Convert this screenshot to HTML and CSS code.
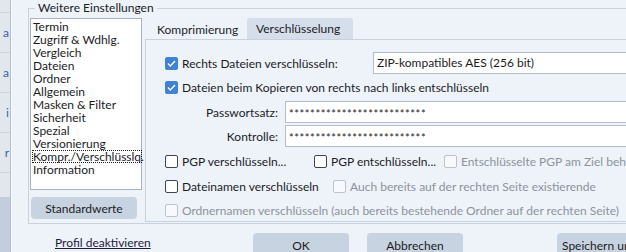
FILE: index.html
```html
<!DOCTYPE html>
<html lang="de">
<head>
    <meta charset="UTF-8">
    <title>Weitere Einstellungen</title>
    <link rel="stylesheet" href="styles.css">
</head>
<body>

<div class="window">

    <div class="side-strip">
        <div class="strip-top"></div>
        <div class="strip-cell">a</div>
        <div class="strip-cell">a</div>
        <div class="strip-cell">i</div>
        <div class="strip-cell">r</div>
        <div class="strip-rest"></div>
        <div class="strip-dark"></div>
    </div>

    <div class="main">
        <fieldset class="settings">
            <legend>Weitere Einstellungen</legend>

            <div class="left-col">
                <ul class="page-list">
                    <li>Termin</li>
                    <li>Zugriff &amp; Wdhlg.</li>
                    <li>Vergleich</li>
                    <li>Dateien</li>
                    <li>Ordner</li>
                    <li>Allgemein</li>
                    <li>Masken &amp; Filter</li>
                    <li>Sicherheit</li>
                    <li>Spezial</li>
                    <li>Versionierung</li>
                    <li class="focused">Kompr./Verschlüsslq.</li>
                    <li>Information</li>
                </ul>
                <button class="btn btn-defaults">Standardwerte</button>
            </div>

            <div class="tabs">
                <div class="tab-strip">
                    <div class="tab">Komprimierung</div>
                    <div class="tab active">Verschlüsselung</div>
                </div>
                <div class="tab-panel">

                    <div class="row">
                        <label class="check check-wide"><span class="box checked"></span>Rechts Dateien verschlüsseln:</label>
                        <div class="combo">ZIP-kompatibles AES (256 bit)</div>
                    </div>

                    <div class="row">
                        <label class="check"><span class="box checked"></span>Dateien beim Kopieren von rechts nach links entschlüsseln</label>
                    </div>

                    <div class="row row-field">
                        <span class="field-label">Passwortsatz:</span>
                        <div class="text-field">**************************</div>
                    </div>

                    <div class="row">
                        <span class="field-label">Kontrolle:</span>
                        <div class="text-field">**************************</div>
                    </div>

                    <div class="row row-pgp">
                        <label class="check w-149"><span class="box"></span>PGP verschlüsseln...</label>
                        <label class="check w-130"><span class="box"></span>PGP entschlüsseln...</label>
                        <label class="check disabled"><span class="box"></span>Entschlüsselte PGP am Ziel behalten</label>
                    </div>

                    <div class="row row-names">
                        <label class="check w-168"><span class="box"></span>Dateinamen verschlüsseln</label>
                        <label class="check disabled"><span class="box"></span>Auch bereits auf der rechten Seite existierende</label>
                    </div>

                    <div class="row">
                        <label class="check disabled"><span class="box"></span>Ordnernamen verschlüsseln (auch bereits bestehende Ordner auf der rechten Seite)</label>
                    </div>

                </div>
            </div>
        </fieldset>

        <div class="bottom-bar">
            <a class="link" href="#">Profil deaktivieren</a>
            <button class="btn btn-ok">OK</button>
            <button class="btn btn-cancel">Abbrechen</button>
            <button class="btn btn-save">Speichern unter...</button>
        </div>
    </div>

</div>

</body>
</html>
```

FILE: styles.css
```css
body {
    font-family: Lato, "Noto Sans", sans-serif;
    font-size: 12px;
    color: #1b1b1f;
    background-color: #eef3fa;
    margin: 0;
    padding: 0;
    width: 626px;
    height: 252px;
    overflow: hidden;
}

.window {
    display: flex;
    height: 252px;
    width: 720px;
}

/* abgeschnittene Liste links */
.side-strip {
    width: 10px;
    flex-shrink: 0;
    display: flex;
    flex-direction: column;
    background-color: #e2e6ed;
    border-right: 1px solid #b3bccb;
    box-shadow: 1px 0 0 #f8fafd;
    margin-right: 17px;
}

.strip-top {
    height: 13px;
    border-bottom: 1px solid #cdd3dd;
    box-sizing: border-box;
}

.strip-cell {
    height: 40px;
    box-sizing: border-box;
    border-bottom: 1px solid #cdd3dd;
    display: flex;
    align-items: center;
    justify-content: flex-end;
    color: #3263a8;
    overflow: hidden;
    padding-right: 1px;
}

.strip-rest {
    height: 24px;
}

.strip-dark {
    flex: 1;
    background-color: #c3cddc;
}

.main {
    display: flex;
    flex-direction: column;
    width: 690px;
}

.settings {
    box-sizing: border-box;
    height: 224px;
    margin: 0;
    padding: 2px 0 0 1px;
    border: 1px solid #c9d1dd;
    display: flex;
    gap: 3px;
}

.settings legend {
    margin-left: 5px;
    padding: 0 3px;
    line-height: 16px;
    font-size: 12px;
}

.left-col {
    display: flex;
    flex-direction: column;
    gap: 7px;
}

.page-list {
    box-sizing: border-box;
    width: 112px;
    height: 172px;
    margin: 0;
    padding: 1px 0 0 1px;
    list-style: none;
    background-color: #fff;
    border: 1px solid #a9b2c1;
}

.page-list li {
    height: 13px;
    line-height: 13px;
    padding-left: 1px;
    white-space: nowrap;
    box-sizing: border-box;
    width: 110px;
}

.page-list li.focused {
    border: 1px dotted #222;
    padding-left: 0;
    line-height: 11px;
}

.btn {
    font-family: inherit;
    font-size: 12px;
    color: #1b1b1f;
    background-color: #c8d3e1;
    border: none;
    border-radius: 4px;
    padding: 0;
}

.btn-defaults {
    width: 106px;
    height: 22px;
    margin-left: 1px;
}

.tabs {
    display: flex;
    flex-direction: column;
    flex: 1;
}

.tab-strip {
    display: flex;
    height: 21px;
    padding-left: 2px;
    align-items: flex-end;
}

.tab {
    width: 100px;
    height: 21px;
    line-height: 23px;
    box-sizing: border-box;
    padding-left: 10px;
}

.tab.active {
    width: 106px;
    padding-left: 9px;
    background-color: #d5deea;
    border-radius: 3px 3px 0 0;
    line-height: 22px;
}

.tab-panel {
    box-sizing: border-box;
    height: 183px;
    border: 1px solid #c9d1dd;
    border-right: 0;
    padding: 12px 0 0 19px;
    display: flex;
    flex-direction: column;
    gap: 2px;
}

.row {
    display: flex;
    align-items: center;
    height: 22px;
    white-space: nowrap;
}

.row-field,
.row-pgp,
.row-names {
    margin-top: 1px;
}

.check {
    display: flex;
    align-items: center;
}

.check-wide {
    width: 208px;
}

.w-149 {
    width: 149px;
}

.w-130 {
    width: 130px;
}

.w-168 {
    width: 168px;
}

.box {
    box-sizing: border-box;
    width: 13px;
    height: 13px;
    margin-right: 4px;
    border: 1px solid #3d4453;
    border-radius: 2px;
    background-color: #fff;
    flex-shrink: 0;
}

.box.checked {
    border-color: #3f83d4;
    background-color: #3f83d4;
    background-image: url("data:image/svg+xml,%3Csvg xmlns='http://www.w3.org/2000/svg' width='11' height='11' viewBox='0 0 11 11'%3E%3Cpath d='M2 5.6 L4.3 7.9 L9 3' fill='none' stroke='white' stroke-width='1.4'/%3E%3C/svg%3E");
    background-position: center;
    background-repeat: no-repeat;
}

.check.disabled {
    color: #8d929b;
}

.check.disabled .box {
    border-color: #bcc3ce;
    background-color: #f7f9fc;
}

.combo {
    box-sizing: border-box;
    width: 300px;
    height: 22px;
    line-height: 20px;
    padding-left: 3px;
    background-color: #fff;
    border: 1px solid #b4bccb;
    border-right: 0;
}

.field-label {
    width: 113px;
    text-align: right;
    margin-right: 7px;
}

.text-field {
    box-sizing: border-box;
    width: 400px;
    height: 22px;
    line-height: 24px;
    padding-left: 3px;
    font-size: 11px;
    letter-spacing: 0.6px;
    background-color: #fff;
    border: 1px solid #b4bccb;
    border-right: 0;
}

.bottom-bar {
    display: flex;
    align-items: flex-start;
    height: 28px;
}

.link {
    color: #1c1c3c;
    margin: 11px 0 0 27px;
    width: 93px;
    white-space: nowrap;
}

.btn-ok,
.btn-cancel,
.btn-save {
    width: 96px;
    height: 24px;
    margin-top: 9px;
    border-radius: 4px 4px 0 0;
}

.btn-ok {
    margin-left: 105px;
}

.btn-cancel {
    margin-left: 18px;
}

.btn-save {
    margin-left: 94px;
    width: 110px;
    text-align: left;
    padding-left: 5px;
}
```
